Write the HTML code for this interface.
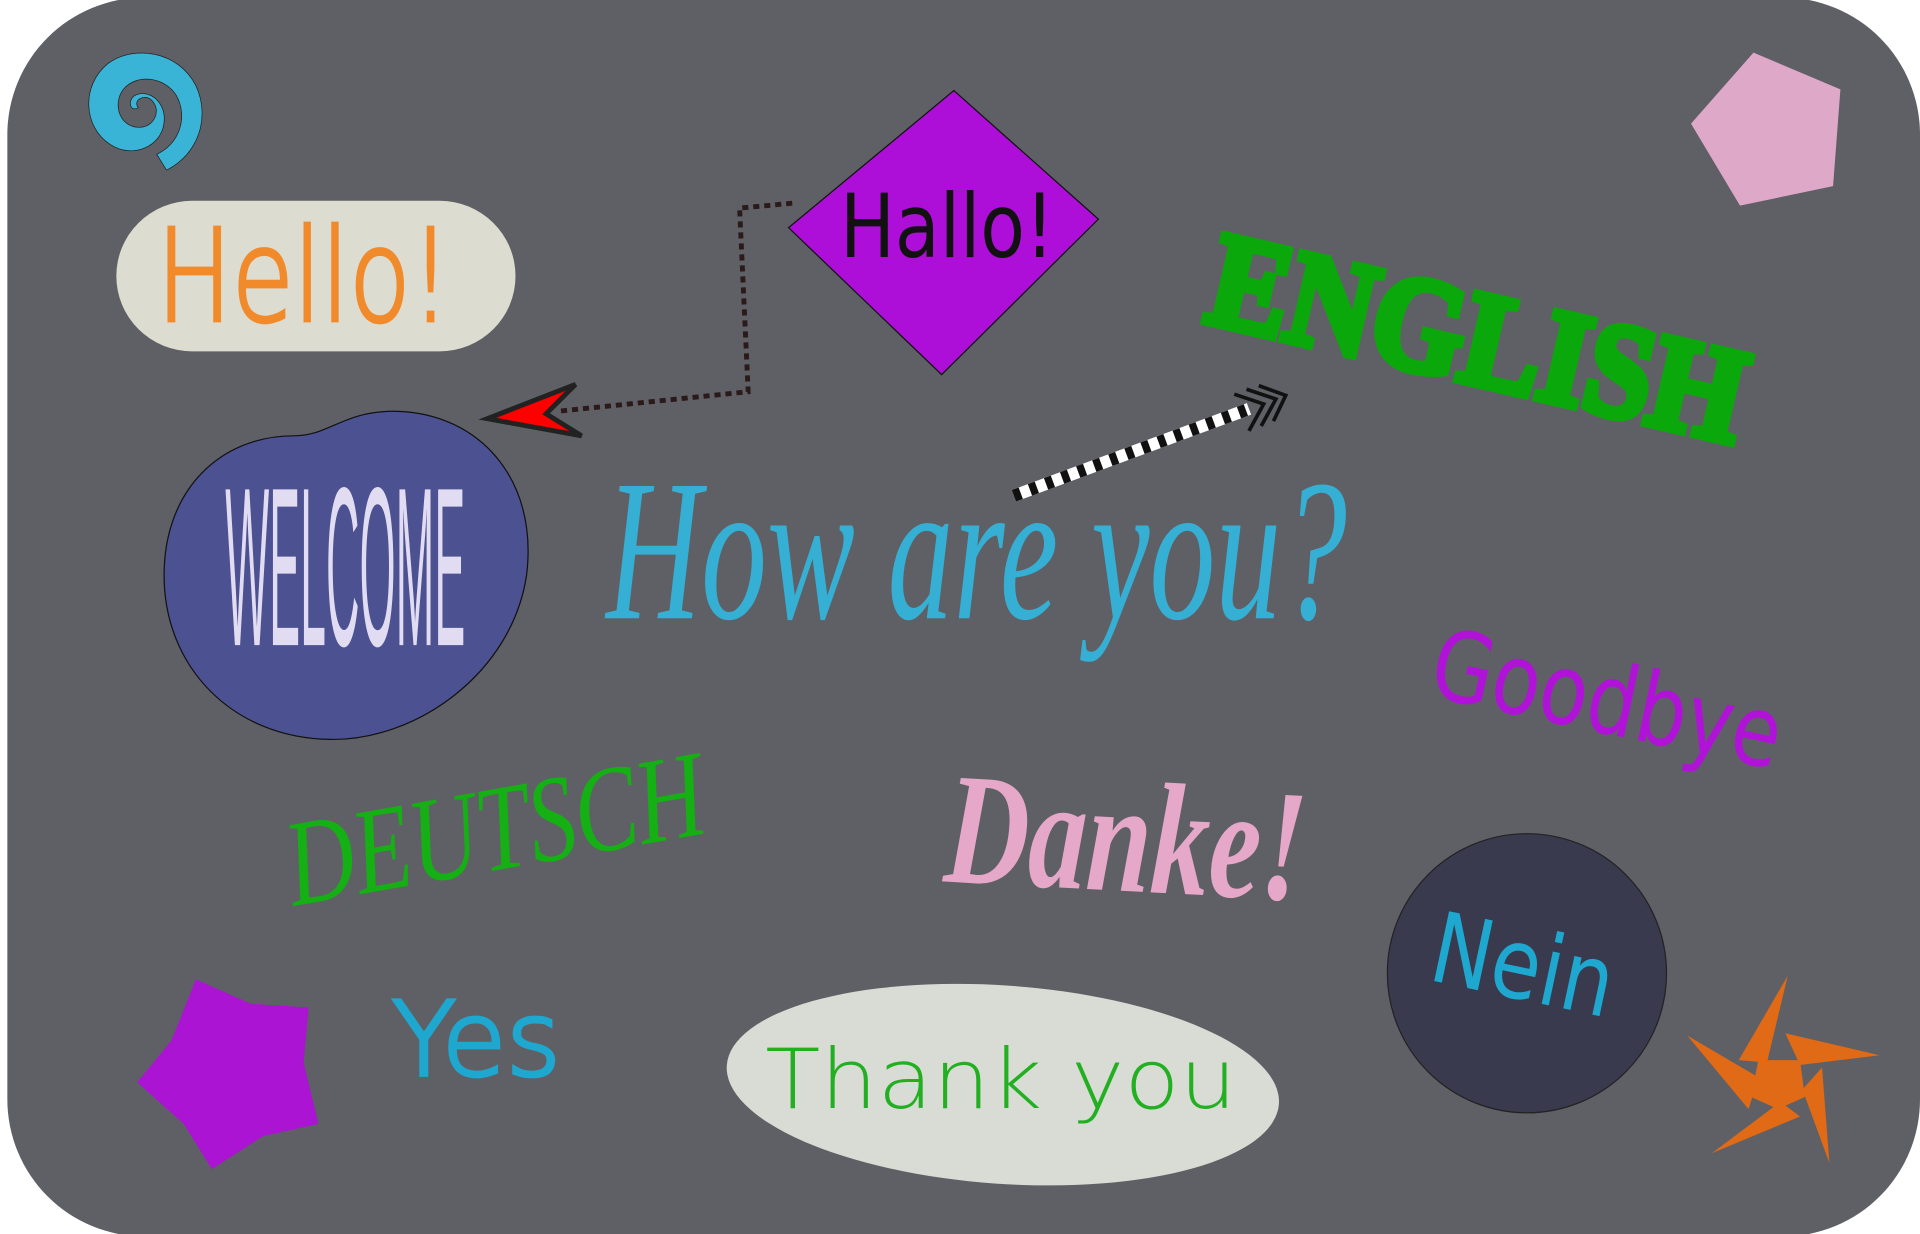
<!DOCTYPE html>
<html><head><meta charset="utf-8"><style>
html,body{margin:0;padding:0;background:#fff;width:1920px;height:1234px;overflow:hidden}
svg{display:block}
</style></head><body>
<svg width="1920" height="1234" viewBox="0 0 1568 1008" preserveAspectRatio="none" xmlns="http://www.w3.org/2000/svg">
<rect x="6" y="-2" width="1562" height="1012" rx="112" fill="#5f6065"/>
<path d="M113,88 C108,82 118,76 124,82 C132,90 126,104 114,104 C98,104 92,86 100,74 C110,60 134,62 144,78 C154,96 146,118 128,126 L136,139 C162,126 172,96 160,70 C146,42 110,36 88,52 C66,70 68,104 90,118 C108,130 132,120 134,100 C136,84 122,72 110,78 C104,82 106,92 113,88 Z" fill="#3ab4d6" stroke="#222" stroke-width="0.6"/>
<rect x="95" y="164" width="326" height="123" rx="62" fill="#dcdcd0"/>
<text x="128" y="262" font-family="DejaVu Sans" font-size="104" fill="#f08a2a" stroke="#f08a2a" stroke-width="3" textLength="240" lengthAdjust="spacingAndGlyphs" font-weight="200">Hello!</text>
<polygon points="779,74 897,179 769,306 644,186" fill="#ad0fd8" stroke="#111" stroke-width="1"/>
<text x="686" y="210" font-family="DejaVu Sans" font-size="72" fill="#111" textLength="175" lengthAdjust="spacingAndGlyphs">Hallo!</text>
<polygon points="1432,43 1503,73 1497,152 1421,168 1381,101" fill="#dea8c8"/>
<text x="0" y="0" transform="translate(982,262) rotate(13)" font-family="Liberation Serif" font-weight="bold" font-size="110" fill="#0aa80a" stroke="#0aa80a" stroke-width="7" textLength="445" lengthAdjust="spacingAndGlyphs">ENGLISH</text>
<path d="M647,166 L604,170 L611,320 L455,336" fill="none" stroke="#2a1a1a" stroke-width="4" stroke-dasharray="5,4"/>
<polygon points="398,342 470,314 446,338 475,356" fill="#f00" stroke="#222" stroke-width="4"/>
<path d="M828,405 L1020,334" stroke="#fff" stroke-width="10"/>
<path d="M828,405 L1020,334" stroke="#111" stroke-width="10" stroke-dasharray="6,8"/>
<path d="M1008,322 L1032,330 L1020,352 M1018,318 L1042,326 L1030,348 M1028,315 L1050,323 L1040,344" fill="none" stroke="#111" stroke-width="3"/>
<path d="M240,356 C270,356 280,335 325,336 C390,338 440,390 430,470 C418,550 340,605 270,604 C190,603 134,545 134,470 C134,400 180,356 240,356 Z" fill="#4c5291" stroke="#111" stroke-width="1"/>
<text x="184" y="527" font-family="Liberation Sans" font-size="185" fill="#e2dcf2" textLength="196" lengthAdjust="spacingAndGlyphs">WELCOME</text>
<text x="495" y="505" font-family="Liberation Serif" font-style="italic" font-size="165" fill="#35b0d4" textLength="605" lengthAdjust="spacingAndGlyphs">How are you?</text>
<text x="0" y="0" transform="translate(1165,568) rotate(12)" font-family="DejaVu Sans" font-size="80" fill="#b012d8" textLength="290" lengthAdjust="spacingAndGlyphs">Goodbye</text>
<text x="0" y="0" transform="translate(240,740) rotate(-10)" font-family="Liberation Serif" font-style="italic" font-size="100" fill="#14b014" textLength="345" lengthAdjust="spacingAndGlyphs">DEUTSCH</text>
<text x="0" y="0" transform="translate(770,720) rotate(3)" font-family="Liberation Serif" font-style="italic" font-weight="bold" font-size="130" fill="#e6a8c8" textLength="295" lengthAdjust="spacingAndGlyphs">Danke!</text>
<circle cx="1247" cy="795" r="114" fill="#393a4e" stroke="#222" stroke-width="1"/>
<text x="0" y="0" transform="translate(1165,800) rotate(12)" font-family="DejaVu Sans" font-size="80" fill="#1ea8d0" textLength="150" lengthAdjust="spacingAndGlyphs">Nein</text>
<polygon points="160,800 205,820 252,823 248,868 260,918 215,928 173,955 150,918 112,884 140,850" fill="#aa14d2"/>
<text x="320" y="878" font-family="DejaVu Sans" font-weight="200" font-size="84" fill="#1ea8d0" stroke="#1ea8d0" stroke-width="3" textLength="138" lengthAdjust="spacingAndGlyphs">Yes</text>
<ellipse cx="819" cy="886" rx="226" ry="81" fill="#d9dcd4" transform="rotate(4 819 886)"/>
<text x="625" y="905" font-family="DejaVu Sans" font-weight="200" font-size="68" fill="#22b022" textLength="385" lengthAdjust="spacingAndGlyphs">Thank you</text>
<g fill="#e06a16">
<polygon points="1460,797 1443,868 1420,866"/>
<polygon points="1535,862 1470,870 1458,844"/>
<polygon points="1494,950 1472,890 1488,872"/>
<polygon points="1398,942 1454,900 1470,912"/>
<polygon points="1378,846 1436,880 1428,906"/>
<polygon points="1436,866 1470,866 1474,896 1452,906 1430,896"/>
</g>
</svg>
</body></html>
